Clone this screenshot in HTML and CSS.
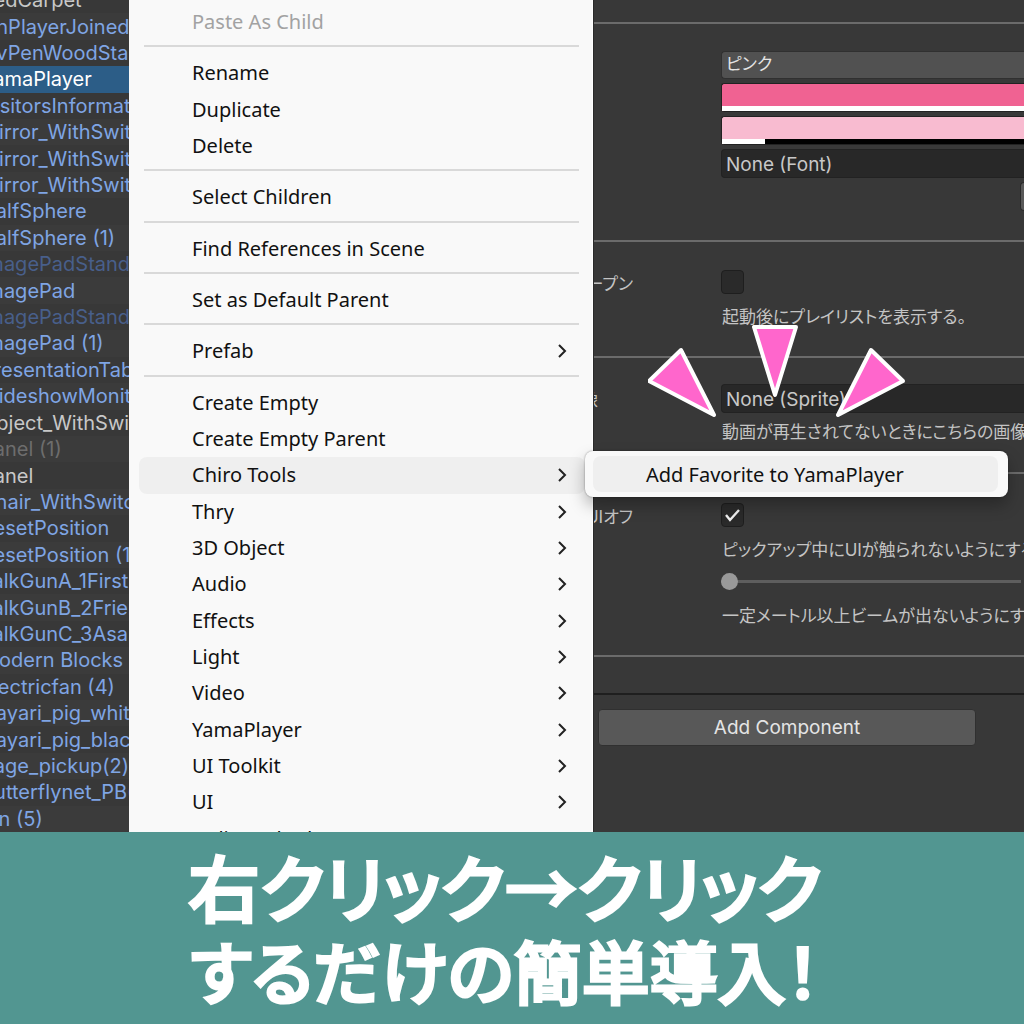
FILE: index.html
```html
<!DOCTYPE html>
<html lang="ja">
<head>
<meta charset="utf-8">
<meta name="viewport" content="width=device-width, initial-scale=1">
<title>Add Favorite to YamaPlayer</title>
<link rel="stylesheet" href="styles.css">
</head>
<body>
<svg class="defs" width="0" height="0" aria-hidden="true">
  <symbol id="chevron" viewBox="0 0 10 16"><path d="M2 2l6 6-6 6" fill="none" stroke="#222" stroke-width="2"/></symbol>
</svg>
<main class="editor">
  <ul class="hierarchy">
    <li class="plain">RedCarpet</li>
    <li>OnPlayerJoined</li>
    <li>QvPenWoodStand</li>
    <li class="selected">YamaPlayer</li>
    <li>VisitorsInformation</li>
    <li>Mirror_WithSwitch</li>
    <li>Mirror_WithSwitch</li>
    <li>Mirror_WithSwitch</li>
    <li>HalfSphere</li>
    <li>HalfSphere (1)</li>
    <li class="inactive">ImagePadStand</li>
    <li>ImagePad</li>
    <li class="inactive">ImagePadStand</li>
    <li>ImagePad (1)</li>
    <li>PresentationTable</li>
    <li>SlideshowMonitor</li>
    <li class="plain">Object_WithSwitch</li>
    <li class="plain inactive">Panel (1)</li>
    <li class="plain">Panel</li>
    <li>Chair_WithSwitch</li>
    <li>ResetPosition</li>
    <li>ResetPosition (1)</li>
    <li>TalkGunA_1First</li>
    <li>TalkGunB_2Friend</li>
    <li>TalkGunC_3Asa</li>
    <li>Modern Blocks Chair</li>
    <li>Electricfan (4)</li>
    <li>Hayari_pig_white</li>
    <li>Hayari_pig_black</li>
    <li>Page_pickup(2)</li>
    <li>Butterflynet_PB(1)</li>
    <li>Pin (5)</li>
  </ul>

  <nav class="menu" aria-label="GameObject">
    <button class="item" disabled>Paste As Child</button>
    <hr>
    <button class="item">Rename</button>
    <button class="item">Duplicate</button>
    <button class="item">Delete</button>
    <hr>
    <button class="item">Select Children</button>
    <hr>
    <button class="item">Find References in Scene</button>
    <hr>
    <button class="item">Set as Default Parent</button>
    <hr>
    <button class="item">Prefab<svg class="chevron"><use href="#chevron"/></svg></button>
    <hr>
    <button class="item">Create Empty</button>
    <button class="item">Create Empty Parent</button>
    <div class="branch">
      <button class="item open">Chiro Tools<svg class="chevron"><use href="#chevron"/></svg></button>
      <div class="submenu">
        <button class="subitem">Add Favorite to YamaPlayer</button>
      </div>
    </div>
    <button class="item">Thry<svg class="chevron"><use href="#chevron"/></svg></button>
    <button class="item">3D Object<svg class="chevron"><use href="#chevron"/></svg></button>
    <button class="item">Audio<svg class="chevron"><use href="#chevron"/></svg></button>
    <button class="item">Effects<svg class="chevron"><use href="#chevron"/></svg></button>
    <button class="item">Light<svg class="chevron"><use href="#chevron"/></svg></button>
    <button class="item">Video<svg class="chevron"><use href="#chevron"/></svg></button>
    <button class="item">YamaPlayer<svg class="chevron"><use href="#chevron"/></svg></button>
    <button class="item">UI Toolkit<svg class="chevron"><use href="#chevron"/></svg></button>
    <button class="item">UI<svg class="chevron"><use href="#chevron"/></svg></button>
    <button class="item">NaliWB Shad<svg class="chevron"><use href="#chevron"/></svg></button>
  </nav>

  <section class="inspector" aria-label="Inspector">
    <div class="group theme">
      <select class="dropdown" aria-label="テーマ"><option>ピンク</option></select>
      <button class="color primary" aria-label="メインカラー"><span class="alpha"></span></button>
      <button class="color secondary" aria-label="サブカラー"><span class="alpha"></span></button>
      <button class="object">None (Font)</button>
      <button class="more" aria-label="適用"></button>
    </div>
    <div class="group">
      <label class="label wide" for="open">オープン</label>
      <input class="check" type="checkbox" id="open">
      <p class="note">起動後にプレイリストを表示する。</p>
    </div>
    <div class="group sprite">
      <label class="label narrow" for="sprite">画像</label>
      <button class="object" id="sprite">None (Sprite)</button>
      <p class="note">動画が再生されてないときにこちらの画像</p>
    </div>
    <div class="group pickup">
      <label class="label wide" for="uioff">UIオフ</label>
      <input class="check" type="checkbox" id="uioff" checked>
      <p class="note">ピックアップ中にUIが触られないようにする</p>
      <input class="range" type="range" min="0" max="10" value="0" aria-label="距離">
      <p class="note">一定メートル以上ビームが出ないようにする</p>
    </div>
    <div class="footer">
      <button class="add">Add Component</button>
    </div>
    <svg class="burst" viewBox="0 0 264 98" aria-hidden="true">
      <g fill="#f6c" stroke="#fff" stroke-width="4" stroke-linejoin="round">
        <path d="M106 5h42l-21 68z"/>
        <path d="M33 28L1 59l65 34z"/>
        <path d="M223 28l32 31-65 34z"/>
      </g>
    </svg>
  </section>
</main>
<footer class="banner">
  <p class="lead">右クリック→クリック</p>
  <p>するだけの簡単導入！</p>
</footer>
</body>
</html>
```
FILE: styles.css
```css
* { box-sizing: border-box; }

body {
  margin: 0;
  height: 100vh;
  display: grid;
  grid-template-rows: minmax(0, 1fr) auto;
  overflow: hidden;
  background: #383838;
  font-family: Inter, "Noto Sans CJK JP", sans-serif;
}

button, input, select { font: inherit; border: 0; margin: 0; padding: 0; }
.defs { position: absolute; }

.editor {
  display: grid;
  grid-template-columns: 129px 464px minmax(0, 1fr);
  grid-template-rows: minmax(0, 1fr);
  overflow: hidden;
}

/* Hierarchy */
.hierarchy {
  list-style: none;
  margin: -13px 0 0;
  padding: 0;
  display: flex;
  flex-direction: column;
  overflow: hidden;
  color: #7fa5e4;
  font-size: 20px;
}
.hierarchy li {
  flex: 1 1 0;
  display: flex;
  align-items: center;
  white-space: nowrap;
  text-indent: -19px;
  line-height: 24px;
}
.hierarchy li:nth-child(even) { background: #3b3b3b; }
.hierarchy .inactive { color: #485f8b; }
.hierarchy .plain { color: #c8c8c8; }
.hierarchy .plain.inactive { color: #6d6d6d; }
.hierarchy li.selected { background: #2c5d87; color: #fff; }

/* Context menu */
.menu {
  position: relative;
  z-index: 2;
  display: flex;
  flex-direction: column;
  margin-bottom: -25px;
  padding: 4px 7px 0 10px;
  background: #f9f9f9;
  border-right: 1px solid #fff;
  font-family: "Noto Sans", "Noto Sans CJK JP", sans-serif;
  font-size: 20px;
}
.menu hr {
  flex: none;
  width: 435px;
  height: 15px;
  margin: 0 5px;
  border: 0;
  background: linear-gradient(#d9d9d9, #d9d9d9) 0 5px / 100% 2px no-repeat;
}
.item, .branch { flex: 1 1 0; min-height: 0; }
.item {
  display: flex;
  align-items: center;
  justify-content: space-between;
  padding: 0 18px 0 53px;
  border-radius: 8px;
  background: none;
  color: #111;
  text-align: left;
  line-height: 24px;
}
.item:disabled { color: #a2a2a2; }
.item.open { background: #efefef; }
.branch { position: relative; display: flex; }
.chevron { width: 10px; height: 16px; }
.submenu {
  position: absolute;
  left: 446px;
  top: -6px;
  width: 423px;
  padding: 5px 10px 5px 8px;
  background: #f9f9f9;
  border-radius: 8px;
  box-shadow: 0 8px 16px rgba(0, 0, 0, .28), 0 0 2px rgba(0, 0, 0, .4);
}
.subitem {
  display: block;
  width: 100%;
  height: 36px;
  padding: 0 0 0 53px;
  border-radius: 8px;
  background: #efefef;
  color: #111;
  text-align: left;
}

/* Inspector */
.inspector {
  position: relative;
  padding-top: 22px;
  overflow: hidden;
  background: #383838;
  color: #c4c4c4;
  font-size: 19px;
  border-left: 1px solid #2a2a2a;
}
.group {
  display: grid;
  grid-template-columns: 127px minmax(0, 1fr);
  align-content: start;
  border-top: 2px solid #6b6b6b;
  height: 116px;
  padding-top: 28px;
}
.group > * { grid-column: 2; }
.theme { height: 218px; padding-top: 27px; row-gap: 4px; }
.dropdown {
  appearance: none;
  height: 28px;
  padding: 0 4px 2px;
  background: #515151;
  border: 1px solid #303030;
  border-right: 0;
  border-radius: 4px 0 0 4px;
  color: #e4e4e4;
  font-size: 17px;
  font-feature-settings: "palt";
}
.color {
  height: 29px;
  display: flex;
  align-items: flex-end;
  border: 1px solid #222;
  border-width: 1px 0 1px 1px;
  border-radius: 3px 0 0 3px;
}
.primary { background: #f06292; }
.secondary { background: #f8bbd0; }
.alpha { width: 100%; height: 5px; background: #fff; }
.secondary .alpha { background: linear-gradient(#fff, #fff) left / 43px 100% no-repeat #000; }
.object {
  height: 29px;
  padding: 2px 4px 0;
  background: #282828;
  border: 1px solid #222;
  border-right: 0;
  border-radius: 4px 0 0 4px;
  color: #c8c8c8;
  text-align: left;
}
.more {
  justify-self: end;
  width: 4px;
  height: 29px;
  background: #585858;
  border: 1px solid #2a2a2a;
  border-right: 0;
  border-radius: 4px 0 0 4px;
}
.group > .label {
  grid-column: 1;
  grid-row: 1;
  display: flex;
  justify-content: flex-end;
  align-items: center;
  height: 24px;
  overflow: hidden;
  white-space: nowrap;
  font-size: 17px;
  font-feature-settings: "palt";
}
.label.wide { width: 39px; }
.label.narrow { width: 4px; height: 29px; }
.check {
  appearance: none;
  grid-row: 1;
  width: 23px;
  height: 24px;
  background: #2a2a2a;
  border: 1px solid #1e1e1e;
  border-radius: 4px;
}
.check:checked {
  background: #2a2a2a url("data:image/svg+xml,%3Csvg xmlns='http://www.w3.org/2000/svg' viewBox='0 0 21 22'%3E%3Cpath d='M4 11l4 5 9-10' fill='none' stroke='%23eee' stroke-width='2.4'/%3E%3C/svg%3E") center / 21px 22px no-repeat;
}
.note {
  margin: 11px 0 0;
  padding-left: 1px;
  height: 24px;
  line-height: 24px;
  font-size: 17px;
  font-feature-settings: "palt";
  white-space: nowrap;
  overflow: hidden;
}
.sprite { padding-top: 26px; }
.sprite .note { margin-top: 7px; }
.pickup { height: 183px; padding-top: 29px; }
.range {
  appearance: none;
  height: 18px;
  margin: 10px 3px 0 0;
  background: linear-gradient(#5e5e5e, #5e5e5e) center / 100% 3px no-repeat;
}
.range::-webkit-slider-thumb {
  appearance: none;
  width: 17px;
  height: 17px;
  border-radius: 50%;
  background: #999;
}
.range + .note { margin-top: 14px; }
.footer { border-top: 2px solid #6b6b6b; }
.footer::before {
  content: "";
  display: block;
  height: 36px;
  border-bottom: 2px solid #1f1f1f;
}
.add {
  display: block;
  width: 378px;
  height: 37px;
  margin: 14px 4px;
  background: #585858;
  border: 1px solid #303030;
  border-radius: 4px;
  color: #e4e4e4;
}
.burst {
  position: absolute;
  left: 54px;
  top: 322px;
  width: 264px;
  height: 98px;
}

/* Caption */
.banner {
  position: relative;
  z-index: 3;
  padding: 10px 14px 12px 0;
  background: #529691;
  color: #fff;
  text-align: center;
  font-family: "Noto Sans CJK JP", sans-serif;
  font-size: 68px;
  font-weight: 500;
  line-height: 85px;
  font-feature-settings: "palt";
  -webkit-text-stroke: 3px #fff;
  stroke-linejoin: round;
}
.banner p { margin: 0; white-space: nowrap; }
.banner .lead { font-size: 72px; }
```
